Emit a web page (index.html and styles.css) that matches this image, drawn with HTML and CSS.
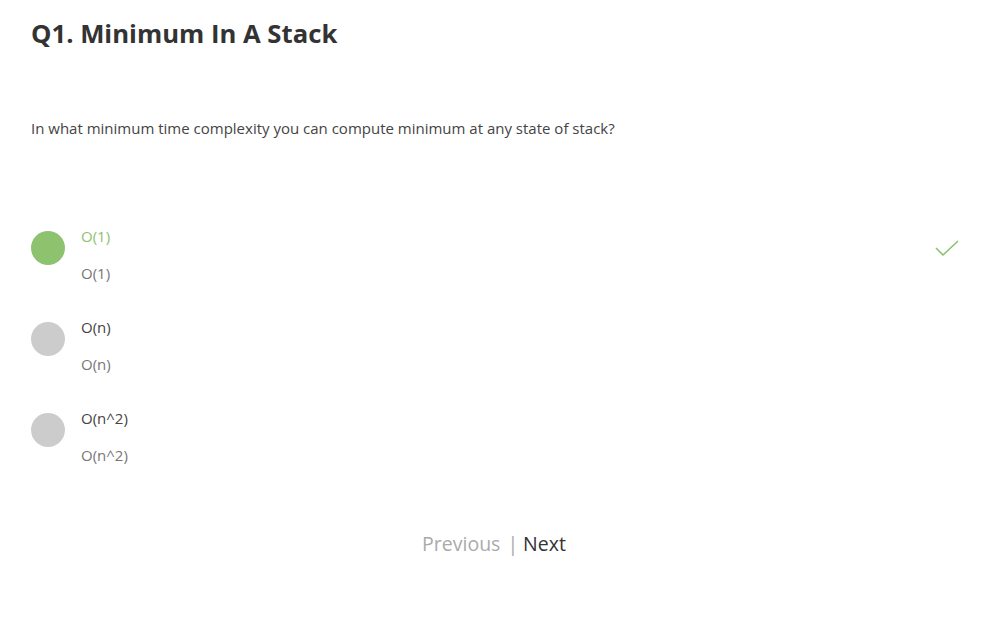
FILE: index.html
```html
<!DOCTYPE html>
<html>
<head>
<meta charset="utf-8">
<link rel="stylesheet" href="styles.css">
</head>
<body>
<div class="page">
  <h1 class="title">Q1. Minimum In A Stack</h1>
  <p class="question">In what minimum time complexity you can compute minimum at any state of stack?</p>
  <div class="options">
    <div class="option correct">
      <span class="dot"></span>
      <div class="texts">
        <div class="label">O(1)</div>
        <div class="sub">O(1)</div>
      </div>
      <svg class="check" width="26" height="18" viewBox="0 0 26 18"><path d="M2 9 L9 16 L24 2" fill="none" stroke="#8dc26f" stroke-width="1.6"/></svg>
    </div>
    <div class="option">
      <span class="dot"></span>
      <div class="texts">
        <div class="label">O(n)</div>
        <div class="sub">O(n)</div>
      </div>
    </div>
    <div class="option">
      <span class="dot"></span>
      <div class="texts">
        <div class="label">O(n^2)</div>
        <div class="sub">O(n^2)</div>
      </div>
    </div>
  </div>
  <div class="nav">
    <span class="prev">Previous</span><span class="sep">|</span><span class="next">Next</span>
  </div>
</div>
</body>
</html>
```
FILE: styles.css
```css
* { box-sizing: border-box; }
body {
  margin: 0;
  background: #fff;
  font-family: "Open Sans", "Lato", sans-serif;
  color: #333;
}
.page {
  padding: 16px 23px 0 31px;
}
.title {
  margin: 0;
  font-size: 25.7px;
  font-weight: 700;
  line-height: 36px;
  color: #333;
}
.question {
  margin: 66px 0 0;
  font-size: 15px;
  line-height: 20px;
  color: #444;
}
.options {
  margin-top: 88px;
  display: flex;
  flex-direction: column;
  gap: 34px;
}
.option {
  display: flex;
  align-items: flex-start;
}
.dot {
  width: 34px;
  height: 34px;
  border-radius: 50%;
  background: #cccccc;
  margin-top: 5px;
  flex: none;
}
.correct .dot { background: #8dc26f; }
.texts {
  margin-left: 16px;
  flex: 1;
}
.label {
  font-size: 15px;
  line-height: 20px;
  color: #444;
}
.correct .label { color: #8dc26f; }
.sub {
  margin-top: 17px;
  font-size: 15px;
  line-height: 20px;
  color: #777;
}
.check {
  margin-top: 13px;
}
.nav {
  margin-top: 65px;
  padding-right: 3px;
  text-align: center;
  font-size: 19.5px;
  line-height: 28px;
}
.prev { color: #aaa; }
.sep { color: #aaa; margin: 0 5px 0 7px; }
.next { color: #333; }
```
